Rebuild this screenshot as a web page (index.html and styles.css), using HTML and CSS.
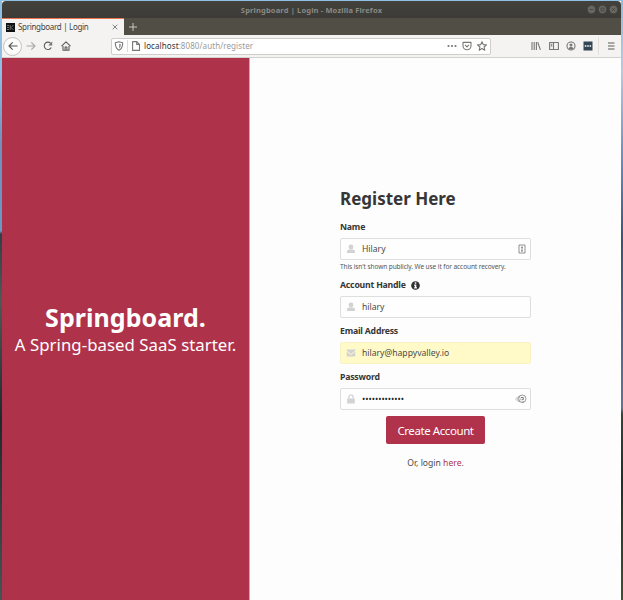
FILE: index.html
```html
<!DOCTYPE html>
<html lang="en">
<head>
<meta charset="utf-8">
<title>Springboard | Login</title>
<link rel="stylesheet" href="styles.css">
</head>
<body>
<div class="desktop">
<div class="window">
  <header class="titlebar">
    <span class="window-title">Springboard | Login - Mozilla Firefox</span>
    <div class="window-buttons">
      <svg viewBox="0 0 9 9"><circle cx="4.5" cy="4.5" r="4.2"/><path d="M2.5 4.5h4"/></svg>
      <svg viewBox="0 0 9 9"><circle cx="4.5" cy="4.5" r="4.2"/><path d="M3 3h3v3H3z"/></svg>
      <svg viewBox="0 0 9 9"><circle cx="4.5" cy="4.5" r="4.2"/><path d="M3 3l3 3M6 3L3 6"/></svg>
    </div>
  </header>
  <div class="tabs">
    <div class="tab">
      <svg class="favicon" viewBox="0 0 9 9"><path fill="#111" d="M0 0h9v9H0z"/><path d="M1 2.5h2M1 4.5h2M1 6.5h2M4.2 2v5M7.5 2L5 4.5 7.5 7" fill="none" stroke="#999" stroke-width=".7"/></svg>
      <span class="tab-title">Springboard | Login</span>
      <svg class="tab-close" viewBox="0 0 6 6"><path d="M.7.7l4.6 4.6M5.3.7L.7 5.3"/></svg>
    </div>
    <svg class="new-tab" viewBox="0 0 8 8"><path d="M4 0v8M0 4h8"/></svg>
  </div>
  <nav class="toolbar">
    <div class="back"><svg class="icon" viewBox="0 0 10 10"><path d="M9.5 5H1M4.7 1.3L1 5l3.7 3.7"/></svg></div>
    <svg class="icon forward" viewBox="0 0 10 10"><path d="M.5 5H9M5.3 1.3L9 5 5.3 8.7"/></svg>
    <svg class="icon reload" viewBox="0 0 10 10"><path d="M8.2 6.6A3.7 3.7 0 1 1 7.7 2.4"/><path class="solid" d="M9.2.6v4H5.3z"/></svg>
    <svg class="icon home" viewBox="0 0 10 10"><path d="M.5 5.2L5 .9l4.5 4.3M2 5v4.3h6V5"/><path d="M4.1 9V6h1.8v3"/></svg>
    <div class="address">
      <svg class="icon shield" viewBox="0 0 10 10"><path d="M5 .8l3.700 1c0 4-.8 6-3.700 7.500C2.100 7.800 1.300 5.800 1.300 1.800z"/><path class="half" d="M5 2.700l2 .5c0 2-.5 3.200-2 4.200z"/></svg>
      <i class="divider"></i>
      <svg class="icon page" viewBox="0 0 10 10"><path d="M1.600.600h4.200L8.500 3.300v6.100H1.600zM5.700.700v2.700h2.700"/></svg>
      <span class="url"><b>localhost</b>:8080/auth/register</span>
      <svg class="icon more" viewBox="0 0 10 10"><g class="solid"><circle cx="1.500" cy="5" r="1.100"/><circle cx="5" cy="5" r="1.100"/><circle cx="8.500" cy="5" r="1.100"/></g></svg>
      <svg class="icon pocket" viewBox="0 0 10 10"><path d="M1 1.400h8v3.300a4 4 0 0 1-8 0zM3 3.900l2 1.900 2-1.900"/></svg>
      <svg class="icon star" viewBox="0 0 10 10"><path d="M5 .7l1.300 2.900 3.200.3-2.400 2.100.7 3.200L5 7.600 2.200 9.200l.7-3.200L.5 3.900l3.200-.3z"/></svg>
    </div>
    <svg class="icon library" viewBox="0 0 10 10"><path d="M1 1v8M3.200 1v8M5.400 1v8M6.700 1.300l2.700 7.600"/></svg>
    <svg class="icon sidebar" viewBox="0 0 10 10"><path d="M.6 1.500h8.800v7H.6zM4.500 1.500v7M1.800 3.300h1.500M1.800 4.900h1.500"/></svg>
    <svg class="icon account" viewBox="0 0 10 10"><circle cx="5" cy="5" r="4"/><g class="solid"><circle cx="5" cy="3.900" r="1.500"/><path d="M2.500 7.500c.3-2 4.700-2 5 0Q5 9.600 2.500 7.500z"/></g></svg>
    <svg class="extension" viewBox="0 0 10 10"><path fill="#344653" d="M.500.500h9v9h-9z"/><path fill="#fff" d="M1.800 4.300h1.500v1.400H1.800zM4.200 4.300h1.500v1.400H4.200zM6.600 4.300h1.500v1.400H6.600z"/></svg>
    <i class="menu-divider"></i>
    <svg class="icon menu" viewBox="0 0 10 10"><path d="M2 2h6.500M2 5h6.500M2 8h6.500"/></svg>
  </nav>
  <main class="content">
    <section class="brand">
      <h1><span>Springboard.</span></h1>
      <p><span>A Spring-based SaaS starter.</span></p>
    </section>
    <section class="signup">
      <form>
        <h2><span>Register Here</span></h2>
        <label><span>Name</span></label>
        <div class="field">
          <svg class="glyph" viewBox="0 0 10 10"><circle cx="5" cy="3" r="2.400"/><path d="M1 9V7.500Q1 5.600 3.200 5.600h3.600Q9 5.600 9 7.500V9z"/></svg>
          <span class="name-value">Hilary</span>
          <svg class="contact" viewBox="0 0 8 10"><path d="M1 1h6v8H1z"/><path d="M4 2.500v5M3 3.300h2M3 6.900h2"/></svg>
        </div>
        <small><span>This isn't shown publicly. We use it for account recovery.</span></small>
        <label><span>Account Handle</span><svg class="info" viewBox="0 0 10 10"><circle cx="5" cy="5" r="4.800" fill="#303030"/><path fill="#fff" d="M4.200 1.500h1.700v1.600H4.200zM3.500 4h2.400v3h.7v1.200H3.500V7h.7V5.200h-.7z"/></svg></label>
        <div class="field">
          <svg class="glyph" viewBox="0 0 10 10"><circle cx="5" cy="3" r="2.400"/><path d="M1 9V7.500Q1 5.600 3.200 5.600h3.600Q9 5.600 9 7.500V9z"/></svg>
          <span>hilary</span>
        </div>
        <label><span>Email Address</span></label>
        <div class="field filled">
          <svg class="glyph" viewBox="0 0 10 10"><path d="M.7 1.500h8.600v1.200L5 5.900.7 2.700z"/><path d="M.7 3.700L5 6.900l4.300-3.200v4.900H.7z"/></svg>
          <span>hilary@happyvalley.io</span>
        </div>
        <label><span>Password</span></label>
        <div class="field">
          <svg class="glyph" viewBox="0 0 10 10"><path d="M1.200 4.500h7.600v5H1.200z"/><path d="M2.900 4.500V3a2.100 2.100 0 0 1 4.200 0v1.500" fill="none" stroke="#d2d2d2" stroke-width="1.300"/></svg>
          <span class="password-value">•••••••••••••</span>
          <svg class="reveal" viewBox="0 0 12 10"><path d="M.5 5Q2.500 2 5.500 2M.5 5Q2.500 8 5.500 8" stroke="#c2c2c2"/><circle cx="4" cy="5" r="1.600" stroke="#c8c8c8"/><circle cx="7.300" cy="4.700" r="3.700" stroke="#999"/><path d="M6 3.500h2.300v2.200H6.500M8 7.500V9" stroke="#777"/></svg>
        </div>
        <button type="button"><span>Create Account</span></button>
        <p class="login"><span>Or, login <a>here</a>.</span></p>
      </form>
    </section>
  </main>
</div>
</div>
</body>
</html>
```
FILE: styles.css
```css
* { box-sizing: border-box; }
body { margin: 0; font-family: "Noto Sans", "Open Sans", sans-serif; color: #363636; overflow: hidden; }
h1, h2, p { margin: 0; }
span { white-space: nowrap; }
svg { display: block; flex: none; }
.desktop {
  width: 623px; height: 600px; padding: 1px 1px 0 2px;
  background:
    linear-gradient(#8fc0e3, #8fc0e3) 0 0 / 623px 1px no-repeat,
    linear-gradient(#8fc0e3 0 12%, #7191b8 24%, #6d98c5 38.500%, #303e48 39%, #505956 50%, #1d292d 70%, #435458) 0 0 / 2px 100% no-repeat,
    linear-gradient(#8bbde2, #b9c8df 12%, #6087bd 28%, #3c5275 40%, #647394 68%, #35453a 69%, #203029 80%, #405036) 100% 0 / 2px 100% no-repeat;
}
.window { width: 619px; height: 599px; display: flex; flex-direction: column; border-radius: 4px 4px 0 0; overflow: hidden; background: #fdfdfd; }
.titlebar { height: 17px; flex: none; display: grid; grid-template-columns: 1fr auto 1fr; align-items: center; background: linear-gradient(#42413c, #3c3b37); }
.window-title { grid-column: 2; font-size: 7.500px; line-height: 16px; font-weight: bold; letter-spacing: .16px; color: #8b8a84; }
.window-buttons { display: flex; gap: 2px; justify-content: flex-end; padding-right: 3px; }
.window-buttons svg { width: 9px; height: 9px; fill: #686761; stroke: #43423d; stroke-width: .8; }
.tabs { height: 17px; flex: none; display: flex; align-items: center; background: #504e45; }
.tab { width: 122px; height: 17px; display: flex; align-items: center; padding-left: 4px; border-top: 1px solid #ee754b; background: #f4f3f1; }
.favicon { width: 9px; height: 9px; }
.tab-title { width: 92px; margin-left: 3px; font-size: 8px; line-height: 14px; letter-spacing: -.31px; color: #444; }
.tab-close { width: 6px; height: 6px; margin-left: 2px; stroke: #666; stroke-width: .8; }
.new-tab { width: 8px; height: 8px; margin-left: 5px; stroke: #c8c7c2; stroke-width: 1; }
.toolbar { height: 23px; flex: none; display: flex; align-items: center; background: #f4f3f1; border-bottom: 1px solid #d4d2cf; }
.icon { width: 10px; height: 10px; fill: none; stroke: #777774; stroke-width: 1.100; stroke-linejoin: round; }
.icon .solid { fill: #777774; stroke: none; }
.icon .half { fill: #a2a2a0; stroke: none; }
.back { width: 19px; height: 19px; margin-left: 1px; display: grid; place-items: center; border: 1px solid #c4c2bf; border-radius: 50%; background: #fcfcfc; flex: none; }
.back .icon { stroke: #555553; }
.forward { margin-left: 4px; opacity: .6; }
.reload { margin-left: 7px; stroke: #5c5c5a; }
.home { margin-left: 8px; stroke: #5c5c5a; }
.address { width: 380px; height: 17px; margin-left: 40px; display: flex; align-items: center; border: 1px solid #d0cecb; border-radius: 2px; background: #fff; flex: none; }
.shield { margin-left: 2px; }
.divider { width: 1px; height: 12px; background: #ddd; margin: 0 3px; }
.url { width: 300px; margin-left: 3px; font-size: 8px; line-height: 14px; letter-spacing: .09px; color: #999; }
.url b { font-weight: normal; color: #333; }
.more { margin-left: 3px; }
.pocket, .star { margin-left: 5px; }
.library { margin-left: 40px; }
.sidebar { margin-left: 8px; }
.account { margin-left: 7px; }
.extension { width: 10px; height: 10px; margin-left: 7px; }
.menu-divider { width: 1px; height: 18px; margin-left: 5px; background: #e1dfdc; }
.menu { margin-left: 7px; stroke: #5c5c5a; }
.content { flex: 1; display: grid; grid-template-columns: 248px 1fr; }
.brand { background: #ae334a; color: #fff; text-align: center; padding-top: 242px; border-right: 1px solid #dba0ab; }
.brand h1 { height: 34px; font-size: 25px; line-height: 34px; letter-spacing: .05px; }
.brand p { height: 22px; font-size: 16.800px; line-height: 22px; letter-spacing: .04px; }
.signup { padding: 130px 0 0 90px; }
form { width: 191px; display: flex; flex-direction: column; }
h2 { height: 21px; font-size: 17px; line-height: 21px; }
label { height: 14px; margin: 6px 0 4px; display: flex; align-items: center; font-size: 8.700px; line-height: 14px; font-weight: bold; letter-spacing: -.2px; }
h2 + label { margin-top: 11px; }
small + label { margin-top: 4px; }
.info { width: 9px; height: 9px; margin-left: 5px; }
.field { height: 22px; display: flex; align-items: center; border: 1px solid #dedede; border-radius: 2px; background: #fefefe; font-size: 8.600px; line-height: 20px; color: #4a4a4a; }
.glyph { width: 10px; height: 10px; margin: 0 6px 0 5px; fill: #d2d2d2; }
.filled { background: #fffac8; border-color: #f8f2c5; }
.contact { width: 8px; height: 10px; margin: 0 4px 0 auto; fill: none; stroke: #777; stroke-width: .8; }
.reveal { width: 12px; height: 10px; margin: 0 3px 0 auto; fill: none; stroke-width: 1; }
.password-value { color: #222; }
small { height: 14px; font-size: 6.500px; line-height: 14px; letter-spacing: -.08px; color: #555; }
button { width: 99px; height: 28px; margin: 6px auto 0; padding: 0; border: 0; border-radius: 2px; background: #b0324b; color: #fff; font: 11.500px/27px "Noto Sans", sans-serif; letter-spacing: -.42px; }
.login { margin-top: 12px; font-size: 8.600px; line-height: 14px; text-align: center; color: #4a4a4a; }
.login a { color: #b0324b; }
```
